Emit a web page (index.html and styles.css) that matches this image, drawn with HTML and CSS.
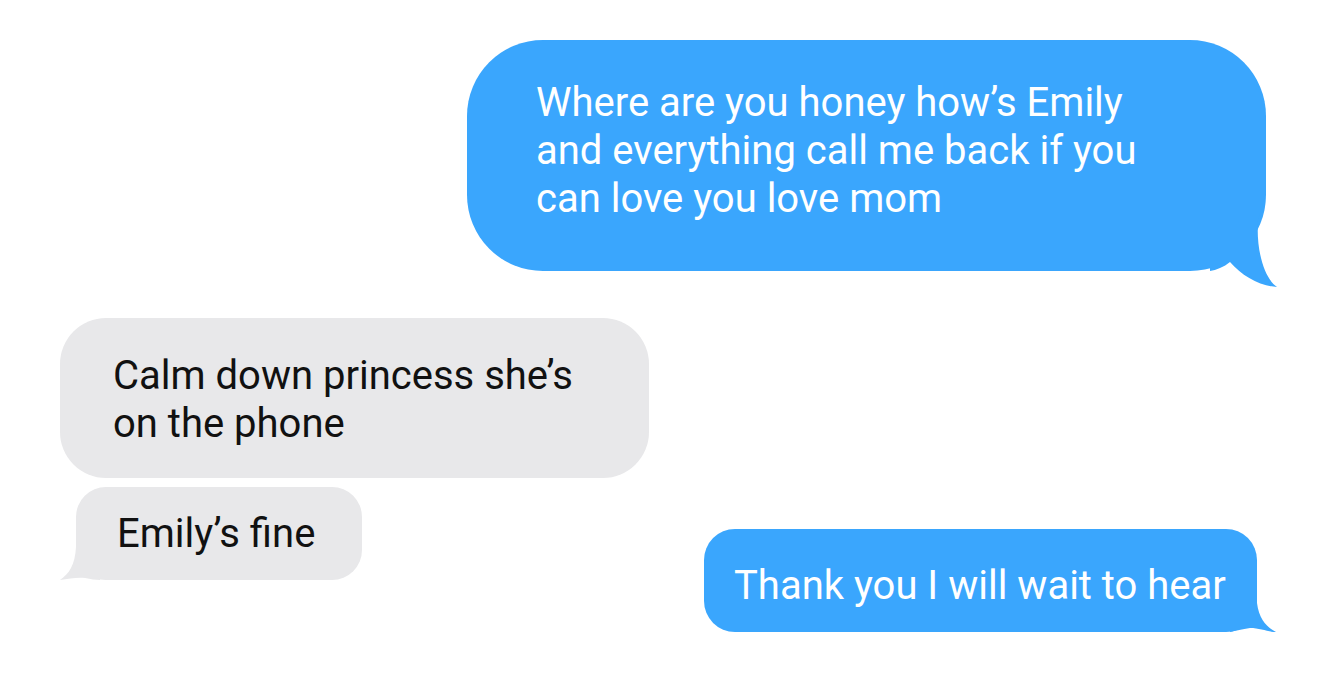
FILE: index.html
```html
<!DOCTYPE html>
<html lang="en">
<head>
    <meta charset="UTF-8">
    <meta name="viewport" content="width=device-width, initial-scale=1.0">
    <title>Messages</title>
    <link rel="stylesheet" href="styles.css">
</head>
<body>
    <div class="thread">
        <!-- Message from mom -->
        <div class="row row-out first">
            <div class="bubble out big">
                <p>Where are you honey how’s Emily<br>and everything call me back if you<br>can love you love mom</p>
                <svg class="tail tail-big" width="70" height="100" viewBox="0 0 70 100">
                    <path d="M56,0 C54,12 50,22 48,30 C46,60 54,88 67,97 C50,96 32,86 20,72 C14,77 6,80 0,81 L0,0 Z" fill="#3aa6fd"/>
                </svg>
            </div>
        </div>

        <!-- Replies -->
        <div class="row row-in">
            <div class="bubble in medium">
                <p>Calm down princess she’s<br>on the phone</p>
            </div>
        </div>

        <div class="row row-split">
            <div class="bubble in small">
                <p>Emily’s fine</p>
                <svg class="tail tail-left" width="50" height="52" viewBox="0 0 50 52">
                    <path d="M21,0 L21,17 C20,35 14,44 5,50 C14,49 22,47 30,48 C36,49 40,50 45,50 L45,0 Z" fill="#e8e8ea"/>
                </svg>
            </div>
            <div class="bubble out short">
                <p>Thank you I will wait to hear</p>
                <svg class="tail tail-short" width="50" height="45" viewBox="0 0 50 45">
                    <path d="M20,0 L27,0 L27,13 C29,30 38,38 46,42 C38,42 30,38 20,38 C12,39 6,41 0,42 L0,0 Z" fill="#3aa6fd"/>
                </svg>
            </div>
        </div>
    </div>
</body>
</html>
```

FILE: styles.css
```css
body {
    margin: 0;
    padding: 0;
    background: #fff;
    font-family: Roboto, "Liberation Sans", sans-serif;
}
.thread {
    width: 1328px;
    height: 674px;
    display: flex;
    flex-direction: column;
}
.row {
    display: flex;
}
.row.first {
    margin-top: 40px;
}
.row-out {
    justify-content: flex-end;
    padding-right: 62px;
}
.row-in {
    padding-left: 60px;
    margin-top: 47px;
}
.row-split {
    margin-top: 9px;
    padding-left: 76px;
    padding-right: 71px;
    justify-content: space-between;
    align-items: flex-start;
}
.bubble {
    position: relative;
    box-sizing: border-box;
}
.bubble p {
    margin: 0;
    position: relative;
    z-index: 1;
    font-size: 40px;
    line-height: 48px;
    white-space: nowrap;
}
.bubble.out {
    background: #3aa6fd;
    color: #fff;
}
.bubble.in {
    background: #e8e8ea;
    color: #111;
}
.big {
    width: 799px;
    height: 231px;
    border-radius: 76px;
    padding: 39px 0 0 69px;
}
.medium {
    width: 589px;
    height: 160px;
    border-radius: 46px;
    padding: 34px 0 0 53px;
}
.small {
    width: 286px;
    height: 93px;
    border-radius: 30px;
    padding: 23px 0 0 41px;
}
.short {
    width: 553px;
    height: 103px;
    border-radius: 31px;
    margin-top: 42px;
    padding: 33px 0 0 30px;
}
.tail {
    position: absolute;
    display: block;
}
.tail-big {
    right: -14px;
    bottom: -19px;
}
.tail-left {
    left: -21px;
    bottom: -2px;
}
.tail-short {
    right: -23px;
    bottom: -3px;
}
```
